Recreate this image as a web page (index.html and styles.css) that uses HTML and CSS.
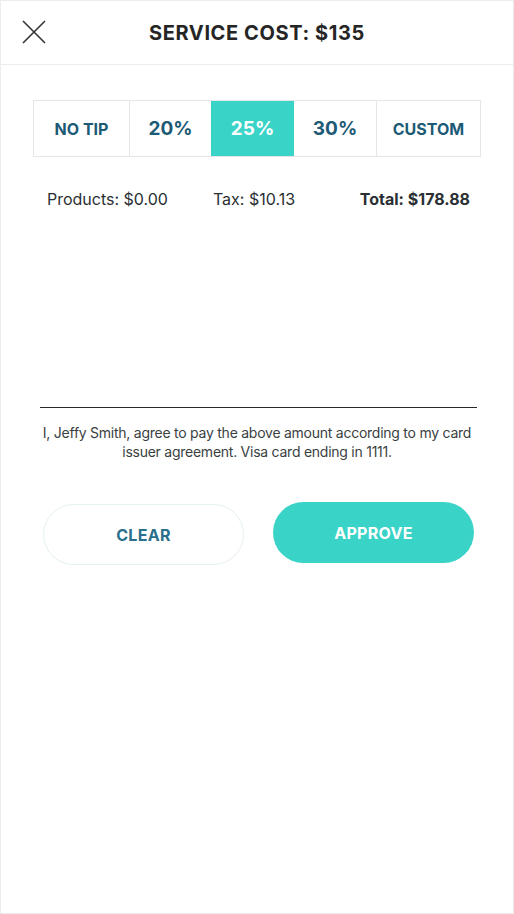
FILE: index.html
```html
<!DOCTYPE html>
<html lang="en">
<head>
    <meta charset="UTF-8">
    <meta name="viewport" content="width=device-width, initial-scale=1.0">
    <title>Service Cost</title>
    <link rel="stylesheet" href="styles.css">
</head>
<body>
    <div class="screen">
        <header class="top-bar">
            <button class="close-btn" aria-label="Close">
                <svg width="24" height="24" viewBox="0 0 24 24">
                    <path d="M1 1 L23 23 M23 1 L1 23" stroke="#333" stroke-width="1.6" fill="none"/>
                </svg>
            </button>
            <h1 class="title">SERVICE COST: $135</h1>
        </header>

        <div class="tip-bar">
            <button class="tip-btn tip-word">NO TIP</button>
            <button class="tip-btn">20%</button>
            <button class="tip-btn active">25%</button>
            <button class="tip-btn">30%</button>
            <button class="tip-btn tip-word">CUSTOM</button>
        </div>

        <div class="totals">
            <span>Products: $0.00</span>
            <span class="tax">Tax: $10.13</span>
            <span class="grand">Total: $178.88</span>
        </div>

        <div class="signature-pad"></div>

        <p class="agreement">I, Jeffy Smith, agree to pay the above amount according to my card issuer agreement. Visa card ending in 1111.</p>

        <div class="actions">
            <button class="pill-btn clear-btn">CLEAR</button>
            <button class="pill-btn approve-btn">APPROVE</button>
        </div>
    </div>
</body>
</html>
```

FILE: styles.css
```css
body {
    margin: 0;
    background: #fff;
    font-family: Inter, "Open Sans", Arial, sans-serif;
}

.screen {
    width: 514px;
    height: 914px;
    box-sizing: border-box;
    border: 1px solid #ececec;
    background: #fff;
}

.top-bar {
    height: 63px;
    border-bottom: 1px solid #ececec;
    display: flex;
    align-items: center;
    justify-content: center;
    position: relative;
}

.close-btn {
    position: absolute;
    left: 21px;
    top: 19px;
    width: 24px;
    height: 24px;
    padding: 0;
    border: none;
    background: none;
}

.close-btn svg {
    display: block;
}

.title {
    margin: 0;
    font-size: 20px;
    font-weight: 700;
    color: #252525;
    letter-spacing: 0.6px;
}

.tip-bar {
    display: grid;
    grid-template-columns: 95px 82px 83px 82px 104px;
    margin: 35px 0 0 32px;
    width: max-content;
    height: 55px;
    border: 1px solid #e6e6e6;
}

.tip-btn {
    border: none;
    border-left: 1px solid #e6e6e6;
    background: #fff;
    color: #1d5a75;
    font-family: inherit;
    font-size: 19px;
    font-weight: 700;
    padding: 0;
}

.tip-btn:first-child {
    border-left: none;
}

.tip-word {
    font-size: 16px;
}

.tip-btn.active {
    background: #3ad3c7;
    color: #fff;
    border-left: none;
}

.tip-btn.active + .tip-btn {
    border-left: none;
}

.totals {
    display: flex;
    align-items: center;
    margin: 32px 43px 0 46px;
    font-size: 16px;
    color: #2a2f33;
}

.tax {
    margin-left: 45px;
}

.grand {
    margin-left: auto;
    font-weight: 700;
}

.signature-pad {
    height: 198px;
    margin: 0 36px 0 39px;
    border-bottom: 1.5px solid #2a2a2a;
}

.agreement {
    margin: 15px 36px 0;
    font-size: 14px;
    line-height: 19px;
    letter-spacing: -0.25px;
    color: #3a3f42;
    text-align: center;
}

.actions {
    display: flex;
    justify-content: space-between;
    margin: 41px 39px 0 42px;
}

.pill-btn {
    width: 201px;
    height: 61px;
    border-radius: 31px;
    font-family: inherit;
    font-size: 16px;
    font-weight: 700;
    letter-spacing: 0.3px;
}

.clear-btn {
    background: #fff;
    border: 1px solid #e5f0ef;
    color: #2a6f8c;
    margin-top: 2px;
}

.approve-btn {
    background: #3ad3c7;
    border: none;
    color: #fff;
}
```
